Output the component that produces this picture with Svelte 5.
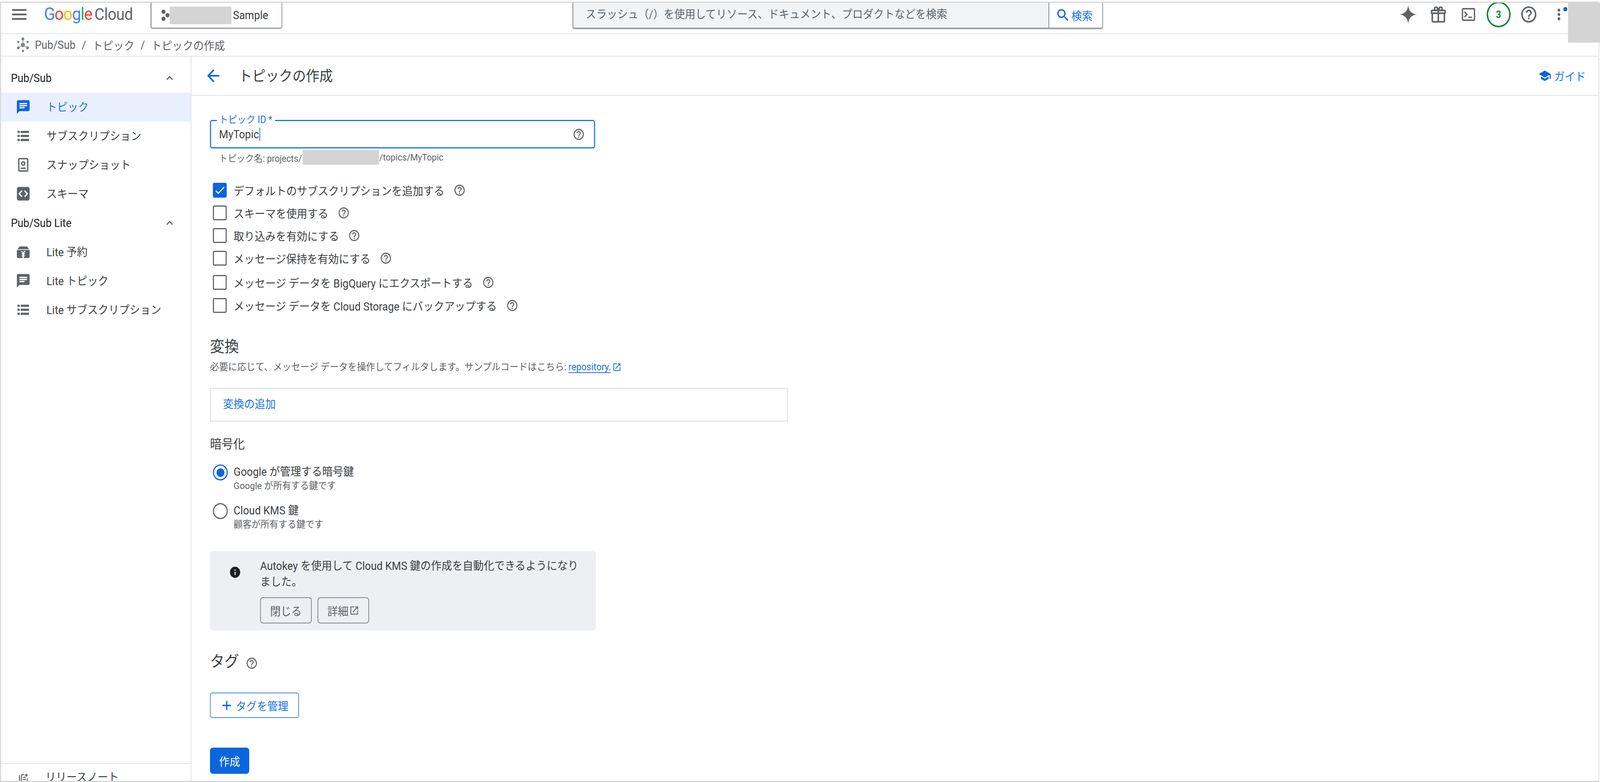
<script>
  const fit = Math.min(1, window.innerWidth / 4404);
  const P = {
    help: "M11 18h2v-2h-2v2zm1-16C6.48 2 2 6.48 2 12s4.48 10 10 10 10-4.48 10-10S17.52 2 12 2zm0 18c-4.41 0-8-3.59-8-8s3.59-8 8-8 8 3.59 8 8-3.59 8-8 8zm0-14c-2.21 0-4 1.79-4 4h2c0-1.1.9-2 2-2s2 .9 2 2c0 2-3 1.75-3 5h2c0-2.25 3-2.5 3-5 0-2.21-1.79-4-4-4z",
    menu: "M3 18h18v-2H3v2zm0-5h18v-2H3v2zm0-7v2h18V6H3z",
    back: "M20 11H7.83l5.59-5.59L12 4l-8 8 8 8 1.41-1.41L7.83 13H20v-2z",
    less: "M12 8l-6 6 1.41 1.41L12 10.83l4.59 4.58L18 14z",
    search: "M15.5 14h-.79l-.28-.27C15.41 12.59 16 11.11 16 9.5 16 5.91 13.09 3 9.5 3S3 5.91 3 9.5 5.91 16 9.5 16c1.61 0 3.09-.59 4.23-1.57l.27.28v.79l5 4.99L20.49 19l-4.99-5zm-6 0C7.01 14 5 11.99 5 9.5S7.01 5 9.5 5 14 7.01 14 9.5 11.99 14 9.5 14z",
    topic: "M20 2H4c-1.1 0-2 .9-2 2v18l4-4h14c1.1 0 2-.9 2-2V4c0-1.1-.9-2-2-2zM6 9h12v2H6V9zm8 5H6v-2h8v2zm4-6H6V6h12v2z",
    list: "M3 4.500h3.500v3.200H3zM8 4.500h13v3.200H8zM3 10.400h3.500v3.200H3zM8 10.400h13v3.200H8zM3 16.300h3.500v3.200H3zM8 16.300h13v3.200H8z",
    snapshot: "M6 2h12c1.1 0 2 .9 2 2v16c0 1.1-.9 2-2 2H6c-1.1 0-2-.9-2-2V4c0-1.1.9-2 2-2zm0 2v16h12V4H6zm6 2.5a3.500 3.500 0 1 1 0 7 3.500 3.500 0 0 1 0-7zm0 2a1.500 1.500 0 1 0 0 3 1.500 1.500 0 0 0 0-3zM8 16h8v2H8v-2z",
    schema: "M5 2h14c1.66 0 3 1.34 3 3v14c0 1.66-1.34 3-3 3H5c-1.66 0-3-1.34-3-3V5c0-1.66 1.34-3 3-3zm5.600 6.400L9.200 7 4.200 12l5 5 1.400-1.400L7 12l3.600-3.600zm2.800 0L17 12l-3.600 3.600 1.400 1.400 5-5-5-5-1.400 1.400z",
    lite: "M6 4h12l3 4H3l3-4zM2 9h20v10c0 1.100-.9 2-2 2H4c-1.100 0-2-.9-2-2V9zm6.600 1.500l2.300 3.500H9.500v1.500H11V17H9.500v1.500H11V21h2v-2.500h1.500V17H13v-1.500h1.500V14h-1.400l2.300-3.500h-2.200L12 13l-1.700-2.500H8.600z",
    info: "M12 2C6.48 2 2 6.48 2 12s4.48 10 10 10 10-4.48 10-10S17.52 2 12 2zm1 15h-2v-6h2v6zm0-8h-2V7h2v2z",
    open: "M19 19H5V5h7V3H5c-1.11 0-2 .9-2 2v14c0 1.1.89 2 2 2h14c1.1 0 2-.9 2-2v-7h-2v7zM14 3v2h3.59l-9.83 9.83 1.41 1.41L19 6.41V10h2V3h-7z",
    school: "M5 13.18v4L12 21l7-3.82v-4L12 17l-7-3.82zM12 3L1 9l11 6 9-4.91V17h2V9L12 3z",
    add: "M19 13h-6v6h-2v-6H5v-2h6V5h2v6h6v2z",
    check: "M9 16.17L4.83 12l-1.42 1.41L9 19 21 7l-1.41-1.41z",
    spark: "M12 1C12.6 7.5 16.500 11.400 23 12C16.500 12.600 12.600 16.500 12 23C11.400 16.500 7.500 12.600 1 12C7.500 11.400 11.400 7.500 12 1z",
    gift: "M20 6h-2.180c.11-.31.18-.65.18-1 0-1.660-1.340-3-3-3-1.050 0-1.960.54-2.500 1.350l-.5.670-.5-.680C10.960 2.540 10.050 2 9 2 7.340 2 6 3.340 6 5c0 .35.07.69.18 1H4c-1.110 0-2 .89-2 2v3h1v9c0 1.100.9 2 2 2h14c1.100 0 2-.9 2-2v-9h1V8c0-1.110-.89-2-2-2zm-5-2c.55 0 1 .45 1 1s-.45 1-1 1-1-.45-1-1 .45-1 1-1zM9 4c.55 0 1 .45 1 1s-.45 1-1 1-1-.45-1-1 .45-1 1-1zM4 8h7v1.500H4V8zm1 3.500h6V20H5v-8.500zM19 20h-6v-8.500h6V20zm1-10.500h-7V8h7v1.500z",
    term: "M4 3h16c1.100 0 2 .9 2 2v14c0 1.100-.9 2-2 2H4c-1.100 0-2-.9-2-2V5c0-1.100.9-2 2-2zm0 2v14h16V5H4zm2.500 2.800L11.200 12l-4.700 4.200-1.300-1.400L8.300 12 5.200 9.200l1.300-1.400zM12 15h5v2h-5v-2z",
    notes: "M4 5h2v15h11v2H6c-1.100 0-2-.9-2-2V5zm4-2h6v2H10v11h10v-5h2v5c0 1.100-.9 2-2 2H10c-1.100 0-2-.9-2-2V5c0-1.100.9-2 2-2zm4 5h6v2h-6V8zm0 4h6v2h-6v-2zM18 2h2v2h2v2h-2v2h-2V6h-2V4h2V2z",
    dots: "M12 8a2 2 0 1 0 0-4 2 2 0 0 0 0 4zm0 2a2 2 0 1 0 0 4 2 2 0 0 0 0-4zm0 6a2 2 0 1 0 0 4 2 2 0 0 0 0-4z"
  };
  const groups = [
    { title: "Pub/Sub", items: [
      { icon: "topic", label: "トピック", active: true },
      { icon: "list", label: "サブスクリプション" },
      { icon: "snapshot", label: "スナップショット" },
      { icon: "schema", label: "スキーマ" }
    ]},
    { title: "Pub/Sub Lite", items: [
      { icon: "lite", label: "Lite 予約" },
      { icon: "topic", label: "Lite トピック" },
      { icon: "list", label: "Lite サブスクリプション" }
    ]}
  ];
  const checks = [
    { label: "デフォルトのサブスクリプションを追加する", on: true },
    { label: "スキーマを使用する" },
    { label: "取り込みを有効にする" },
    { label: "メッセージ保持を有効にする" },
    { label: "メッセージ データを BigQuery にエクスポートする", cls: "far" },
    { label: "メッセージ データを Cloud Storage にバックアップする", cls: "far2" }
  ];
</script>

{#snippet ic(name, cls)}
  <svg class={cls} viewBox="0 0 24 24" aria-hidden="true"><path d={P[name]} /></svg>
{/snippet}

<div class="window">
<div class="page" style="transform: scaleX({fit})">
  <div class="frame">
    <header class="top">
      {@render ic("menu", "i-menu")}
      <div class="logo"><span class="g"><b class="c1">G</b><b class="c2">o</b><b class="c3">o</b><b class="c1">g</b><b class="c4">l</b><b class="c2">e</b></span> <span class="cloud">Cloud</span></div>
      <div class="picker">
        <svg class="i-proj" viewBox="0 0 24 30" aria-hidden="true"><circle cx="7" cy="6" r="5.500" /><circle cx="18" cy="15" r="5.500" /><circle cx="7" cy="24" r="5.500" /></svg>
        <span class="mask"></span><span>Sample</span>
      </div>
      <div class="search">
        <div class="s-field">スラッシュ（/）を使用してリソース、ドキュメント、プロダクトなどを検索</div>
        <div class="s-btn">{@render ic("search", "i-search")}<span>検索</span></div>
      </div>
      <div class="tools">
        <div class="tool">{@render ic("spark", "i-spark")}</div>
        <div class="tool">{@render ic("gift", "i-gift")}</div>
        <div class="tool">{@render ic("term", "i-term")}</div>
        <div class="tool"><span class="count">3</span></div>
        <div class="tool">{@render ic("help", "i-tool-help")}</div>
        <div class="tool dotwrap">{@render ic("dots", "i-dots")}<span class="blue-dot"></span></div>
      </div>
    </header>

    <nav class="crumbs">
      <svg class="i-pubsub" viewBox="0 0 24 24" aria-hidden="true">
        <g class="links"><path d="M12 3v9M12 12l-7.500 4.500M12 12l7.500 4.500" /></g>
        <circle cx="12" cy="2.800" r="2.300" /><circle cx="12" cy="12" r="3.300" /><circle cx="4.300" cy="7.500" r="1.800" /><circle cx="19.700" cy="7.500" r="1.800" /><circle cx="4.300" cy="16.500" r="2.300" /><circle cx="19.700" cy="16.500" r="2.300" /><circle cx="12" cy="21.200" r="1.900" />
      </svg>
      <span>Pub/Sub</span><span class="sep">/</span><span>トピック</span><span class="sep">/</span><span>トピックの作成</span>
    </nav>

    <div class="body">
      <aside class="side">
        <div class="side-scroll">
          {#each groups as g}
            <div class="group">
              <div class="g-head"><span>{g.title}</span>{@render ic("less", "i-less")}</div>
              {#each g.items as it}
                <div class="item" class:active={it.active}>{@render ic(it.icon, "i-nav")}<span>{it.label}</span></div>
              {/each}
            </div>
          {/each}
        </div>
        <div class="side-foot">{@render ic("notes", "i-notes")}<span>リリースノート</span></div>
      </aside>

      <main class="main">
        <div class="title">
          {@render ic("back", "i-back")}
          <h1>トピックの作成</h1>
          <div class="guide">{@render ic("school", "i-school")}<span>ガイド</span></div>
        </div>
        <div class="content">
          <div class="field">
            <span class="f-label">トピック ID *</span>
            <span class="f-value">MyTopic<i class="caret"></i></span>
            {@render ic("help", "i-help")}
          </div>
          <div class="hint"><span>トピック名: projects/</span><span class="mask2"></span><span>/topics/MyTopic</span></div>

          <div class="checks">
            {#each checks as c}
              <div class="check {c.cls || ''}">
                <span class="box" class:on={c.on}>{#if c.on}{@render ic("check", "i-check")}{/if}</span>
                <span class="c-label">{c.label}</span>
                {@render ic("help", "i-help")}
              </div>
            {/each}
          </div>

          <h2 class="h-big first">変換</h2>
          <p class="desc">必要に応じて、メッセージ データを操作してフィルタします。サンプルコードはこちら: <span class="link">repository.</span>{@render ic("open", "i-open-link")}</p>
          <div class="add-box">変換の追加</div>

          <h3 class="h-mid">暗号化</h3>
          <div class="radio first-r">
            <span class="dot on"></span>
            <div><div class="r-main">Google が管理する暗号鍵</div><div class="r-sub">Google が所有する鍵です</div></div>
          </div>
          <div class="radio second-r">
            <span class="dot"></span>
            <div><div class="r-main">Cloud KMS 鍵</div><div class="r-sub">顧客が所有する鍵です</div></div>
          </div>

          <div class="notice">
            {@render ic("info", "i-info")}
            <div class="n-body">
              <p>Autokey を使用して Cloud KMS 鍵の作成を自動化できるようになり<br />ました。</p>
              <div class="n-btns">
                <span class="btn">閉じる</span>
                <span class="btn">詳細{@render ic("open", "i-open")}</span>
              </div>
            </div>
          </div>

          <div class="tags"><h2 class="h-big">タグ</h2>{@render ic("help", "i-help")}</div>
          <div class="manage">{@render ic("add", "i-add")}<span>タグを管理</span></div>
          <div class="create">作成</div>
        </div>
      </main>
    </div>
  </div>
  <div class="corner"></div>
</div>
</div>

<style>
  :global(body) { margin: 0; background: #fff; }
  .window { width: 100vw; height: 2002px; overflow: hidden; }
  .page {
    position: relative; width: 4404px; height: 2002px; padding-top: 4px; box-sizing: border-box; overflow: hidden; transform-origin: 0 0;
    font-family: Roboto, "Noto Sans CJK JP", sans-serif; font-size: 29px; color: #3c4043; background: #fff;
  }
  svg { display: block; fill: currentColor; fill-rule: evenodd; flex: none; }
  h1, h2, h3, p { margin: 0; font-weight: 400; }
  .frame {
    height: 1998px; box-sizing: border-box; margin-right: 2px;
    border: 3px solid #d8d8d8; border-right: 2px solid #dfe1e5;
    display: flex; flex-direction: column;
  }
  .top { height: 78px; flex: none; display: flex; align-items: flex-start; border-bottom: 2px solid #e0e2e6; overflow: hidden; }
  .i-menu { width: 48px; height: 48px; margin: 6px 0 0 26px; color: #5f6368; transform: scale(1.100, 1.150); }
  .logo { width: 294px; margin-left: 44px; height: 60px; line-height: 58px; white-space: nowrap; font-size: 45px; letter-spacing: -1.600px; color: #5f6368; flex: none; }
  .g b { font-weight: 400; }
  .c1 { color: #4285f4; } .c2 { color: #ea4335; } .c3 { color: #fbbc05; } .c4 { color: #34a853; }
  .cloud { font-size: 42px; margin-left: -3px; letter-spacing: -0.600px; }
  .picker {
    width: 362px; height: 66px; box-sizing: border-box; flex: none; display: flex; align-items: center; padding-left: 26px;
    border: 2px solid #80868b; border-top: 0; border-radius: 0 0 6px 6px; box-shadow: 0 1px 2px rgba(60,64,67,.35);
    color: #3c4043;
  }
  .i-proj { width: 24px; height: 30px; color: #5f6368; }
  .mask { width: 170px; height: 45px; background: #d4d4d4; margin-right: 4px; }
  .search { width: 1460px; height: 66px; margin-left: 799px; box-sizing: border-box; flex: none; display: flex; border: 2px solid #80868b; border-top: 0; border-radius: 0 0 6px 6px; box-shadow: 0 2px 2px rgba(60,64,67,.4); overflow: hidden; }
  .s-field { width: 1310px; background: #f1f3f4; box-sizing: border-box; padding: 0 0 4px 34px; line-height: 60px; color: #5f6368; white-space: nowrap; border-right: 2px solid #80868b; }
  .s-btn { flex: 1; display: flex; align-items: center; color: #1a73e8; padding-left: 17px; }
  .i-search { width: 42px; height: 42px; margin-right: 2px; color: #0b65dc; }
  .tools { margin-left: auto; margin-right: 68px; display: flex; flex: none; }
  .tool { position: relative; width: 83px; height: 60px; display: flex; align-items: center; justify-content: center; color: #5f6368; }
  .i-spark { width: 52px; height: 52px; }
  .i-gift { width: 50px; height: 50px; }
  .i-term { width: 44px; height: 44px; }
  .i-tool-help { width: 50px; height: 50px; }
  .i-dots { width: 44px; height: 44px; }
  .count { flex: none; width: 66px; height: 66px; box-sizing: border-box; border: 4px solid #188038; border-radius: 50%; display: flex; align-items: center; justify-content: center; color: #188038; font-size: 25px; font-weight: 700; }
  .blue-dot { position: absolute; left: 54px; top: 11px; width: 11px; height: 11px; border-radius: 50%; background: #0b65dc; }

  .crumbs { flex: none; height: 56px; border-bottom: 2px solid #e0e2e6; display: flex; align-items: center; color: #5f6368; padding-left: 40px; white-space: nowrap; }
  .i-pubsub { width: 40px; height: 40px; margin-right: 13px; color: #80868b; }
  .links path { fill: none; stroke: currentColor; stroke-width: 1; }
  .sep { margin: 0 17px; font-style: normal; }

  .body { flex: 1; min-height: 0; display: flex; }
  .side { width: 524px; flex: none; box-sizing: border-box; border-right: 2px solid #e0e2e6; display: flex; flex-direction: column; overflow: hidden; }
  .side-scroll { flex: 1; padding-top: 17px; }
  .g-head { height: 75px; display: flex; align-items: center; justify-content: space-between; padding: 0 40px 0 27px; color: #202124; }
  .i-less { width: 36px; height: 36px; color: #5f6368; }
  .item { height: 74px; display: flex; align-items: center; padding-left: 40px; white-space: nowrap; }
  .item span { margin-left: 43px; position: relative; top: -2px; }
  .i-nav { width: 42px; height: 42px; color: #5f6368; }
  .item.active { background: #e8f0fe; color: #1a73e8; }
  .item.active .i-nav { color: #0b65dc; }
  .side-foot { flex: none; height: 45px; box-sizing: border-box; border-top: 2px solid #e0e2e6; display: flex; align-items: flex-start; padding: 16px 0 0 44px; overflow: hidden; }
  .i-notes { width: 32px; height: 32px; margin-top: 6px; color: #5f6368; }
  .side-foot span { margin-left: 46px; line-height: 36px; }

  .main { flex: 1; min-width: 0; display: flex; flex-direction: column; }
  .title { flex: none; height: 100px; box-sizing: border-box; border-bottom: 2px solid #e0e2e6; display: flex; align-items: center; padding-left: 35px; }
  .i-back { width: 50px; height: 50px; color: #0b65dc; }
  .title h1 { font-size: 37px; margin-left: 45px; color: #3c4043; position: relative; top: -2px; }
  .guide { margin-left: auto; margin-right: 35px; display: flex; align-items: center; color: #1a73e8; }
  .i-school { width: 36px; height: 36px; margin-right: 8px; color: #0b65dc; }
  .content { flex: 1; padding: 62px 0 0 51px; }

  .field { position: relative; width: 1060px; height: 73px; box-sizing: border-box; border: 3px solid #1a73e8; border-radius: 6px; display: flex; align-items: center; justify-content: space-between; padding: 0 25px 0 22px; }
  .f-label { position: absolute; left: 16px; top: -16px; padding: 0 8px 0 6px; background: #fff; font-size: 25px; line-height: 26px; color: #1a73e8; }
  .f-value { display: flex; align-items: center; color: #3c4043; }
  .caret { width: 2px; height: 34px; background: #1a73e8; margin-left: 1px; }
  .i-help { width: 34px; height: 34px; color: #5f6368; }
  .hint { height: 38px; margin-top: 4px; padding-left: 25px; display: flex; align-items: center; font-size: 24px; color: #5f6368; }
  .mask2 { width: 210px; height: 38px; background: #d4d4d4; margin: 0 1px 0 2px; }

  .checks { margin-top: 46px; display: flex; flex-direction: column; gap: 20px; }
  .check { height: 38px; display: flex; align-items: center; padding-left: 8px; white-space: nowrap; }
  .check.far { margin-top: 4px; }
  .check.far2 { margin-top: 1px; }
  .box { width: 38px; height: 38px; box-sizing: border-box; border: 3px solid #5f6368; border-radius: 4px; display: flex; align-items: center; justify-content: center; flex: none; }
  .box.on { background: #0b65dc; border-color: #0b65dc; color: #fff; }
  .i-check { width: 34px; height: 34px; }
  .c-label { margin: 0 25px 0 19px; }

  .h-big { font-size: 40px; line-height: 56px; color: #3c4043; }
  .h-big.first { margin-top: 59px; }
  .desc { margin-top: 6px; height: 36px; line-height: 36px; font-size: 25px; color: #5f6368; display: flex; align-items: center; white-space: pre; }
  .link { color: #1a73e8; text-decoration: underline; text-underline-offset: 5px; }
  .i-open-link { width: 26px; height: 26px; margin-left: 3px; color: #1a73e8; }
  .add-box { margin-top: 35px; width: 1591px; height: 86px; box-sizing: border-box; border: 2px solid #dadce0; padding-left: 34px; line-height: 80px; color: #1a73e8; }

  .h-mid { margin-top: 36px; font-size: 32px; line-height: 44px; color: #3c4043; }
  .radio { display: flex; align-items: flex-start; padding-left: 8px; }
  .first-r { margin-top: 30px; }
  .second-r { margin-top: 27px; }
  .dot { width: 41px; height: 41px; box-sizing: border-box; border: 3px solid #5f6368; border-radius: 50%; margin-right: 16px; flex: none; display: flex; align-items: center; justify-content: center; }
  .dot.on { border-color: #0b65dc; }
  .dot.on::after { content: ""; width: 22px; height: 22px; border-radius: 50%; background: #0b65dc; }
  .r-main { line-height: 38px; color: #3c4043; }
  .r-sub { line-height: 34px; font-size: 24.700px; color: #5f6368; }

  .notice { margin-top: 51px; width: 1062px; height: 203px; box-sizing: border-box; background: #eeeff3; border-radius: 8px; display: flex; padding: 18px 0 18px 55px; }
  .i-info { width: 34px; height: 34px; margin: 19px 52px 0 -3px; color: #202124; }
  .n-body p { line-height: 41px; color: #3c4043; white-space: nowrap; }
  .n-btns { margin-top: 18px; display: flex; gap: 16px; }
  .btn { width: 142px; height: 67px; box-sizing: border-box; border: 2px solid #80868b; border-radius: 8px; display: flex; align-items: center; justify-content: center; color: #5f6368; }
  .i-open { width: 28px; height: 28px; margin-left: 2px; }

  .tags { margin-top: 52px; height: 56px; display: flex; align-items: center; gap: 18px; }
  .tags .i-help { margin-top: 8px; }
  .manage { margin-top: 51px; width: 245px; height: 65px; box-sizing: border-box; border: 2px solid #3f86e8; border-radius: 6px; display: flex; align-items: center; padding-left: 24px; color: #1a73e8; }
  .i-add { width: 40px; height: 40px; color: #0b65dc; margin-right: 5px; }
  .create { margin-top: 76px; width: 108px; height: 67px; border-radius: 8px; background: #0b65dc; color: #fff; display: flex; align-items: center; justify-content: center; }

  .corner { position: absolute; right: 0; top: 7px; width: 88px; height: 102px; background: #d4d4d4; }
</style>
